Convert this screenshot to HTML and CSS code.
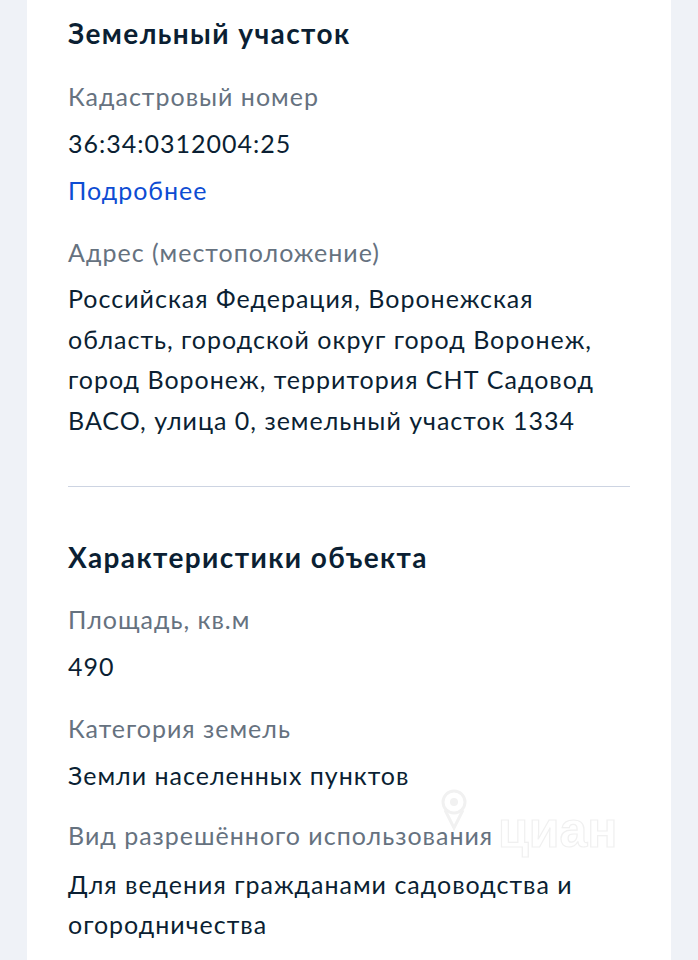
FILE: index.html
```html
<!DOCTYPE html>
<html lang="ru">
<head>
<meta charset="utf-8">
<title>Земельный участок</title>
<link rel="stylesheet" href="styles.css">
</head>
<body>
<main class="card">
  <section class="section">
    <h2 class="section-title">Земельный участок</h2>
    <div class="field">
      <div class="label">Кадастровый номер</div>
      <div class="value">36:34:0312004:25</div>
      <a class="link" href="#">Подробнее</a>
    </div>
    <div class="field">
      <div class="label">Адрес (местоположение)</div>
      <div class="value value-address">Российская Федерация, Воронежская область, городской округ город Воронеж, город Воронеж, территория СНТ Садовод ВАСО, улица 0, земельный участок 1334</div>
    </div>
  </section>
  <hr class="divider">
  <section class="section section-second">
    <h2 class="section-title">Характеристики объекта</h2>
    <div class="field">
      <div class="label">Площадь, кв.м</div>
      <div class="value">490</div>
    </div>
    <div class="field">
      <div class="label">Категория земель</div>
      <div class="value">Земли населенных пунктов</div>
    </div>
    <div class="field field-last">
      <div class="label">Вид разрешённого использования</div>
      <div class="value">Для ведения гражданами садоводства и огородничества</div>
    </div>
  </section>
  <div class="watermark" aria-hidden="true">
    <svg class="wm-pin" width="28" height="44" viewBox="0 0 28 44">
      <circle cx="14" cy="14" r="11" fill="none" stroke="#f1f1f1" stroke-width="3"/>
      <circle cx="14" cy="14" r="4" fill="#f1f1f1"/>
      <path d="M5 22 L14 40 L23 22" fill="none" stroke="#f1f1f1" stroke-width="3"/>
    </svg>
    <span class="wm-text">циан</span>
  </div>
</main>
</body>
</html>
```
FILE: styles.css
```css
html, body {
  margin: 0;
  padding: 0;
}
body {
  background: #eff2f7;
  font-family: Lato, "Noto Sans", sans-serif;
  color: #0b1f33;
  height: 960px;
  overflow: hidden;
}
.card {
  position: relative;
  margin-left: 27px;
  width: 644px;
  min-height: 960px;
  box-sizing: border-box;
  background: #ffffff;
  padding: 14px 41px 0 41px;
}
.section-title {
  margin: 0;
  font-size: 28px;
  line-height: 38px;
  font-weight: 700;
  letter-spacing: 1.4px;
  color: #0b1f33;
}
.field {
  margin-top: 22px;
}
.section .field:first-of-type {
  margin-top: 24px;
}
.section-second .field:first-of-type {
  margin-top: 23px;
}
.label {
  font-size: 25px;
  line-height: 40px;
  letter-spacing: 1px;
  color: #66727f;
}
.value {
  margin-top: 7px;
  font-size: 25px;
  line-height: 40px;
  letter-spacing: 1px;
  color: #0b1f33;
}
.value-address {
  margin-top: 6px;
  line-height: 40.67px;
}
.link {
  display: block;
  margin-top: 7px;
  font-size: 25px;
  line-height: 40px;
  letter-spacing: 1px;
  color: #0d4cd3;
  text-decoration: none;
}
.divider {
  margin: 45px 0 0 0;
  border: 0;
  height: 1px;
  background: #cdd4e2;
}
.section-second {
  margin-top: 51px;
}
.section-second .field-last {
  margin-top: 20px;
}
.field-last .value {
  margin-top: 9px;
  line-height: 40.5px;
}
.watermark {
  position: absolute;
  left: 413px;
  top: 788px;
  display: flex;
  align-items: flex-end;
  gap: 30px;
  pointer-events: none;
}
.wm-pin {
  margin-bottom: 26px;
}
.wm-text {
  font-family: "Liberation Sans", sans-serif;
  font-size: 50px;
  line-height: 56px;
  font-weight: 700;
  color: transparent;
  -webkit-text-stroke: 1.2px #f0f0f0;
}
```
